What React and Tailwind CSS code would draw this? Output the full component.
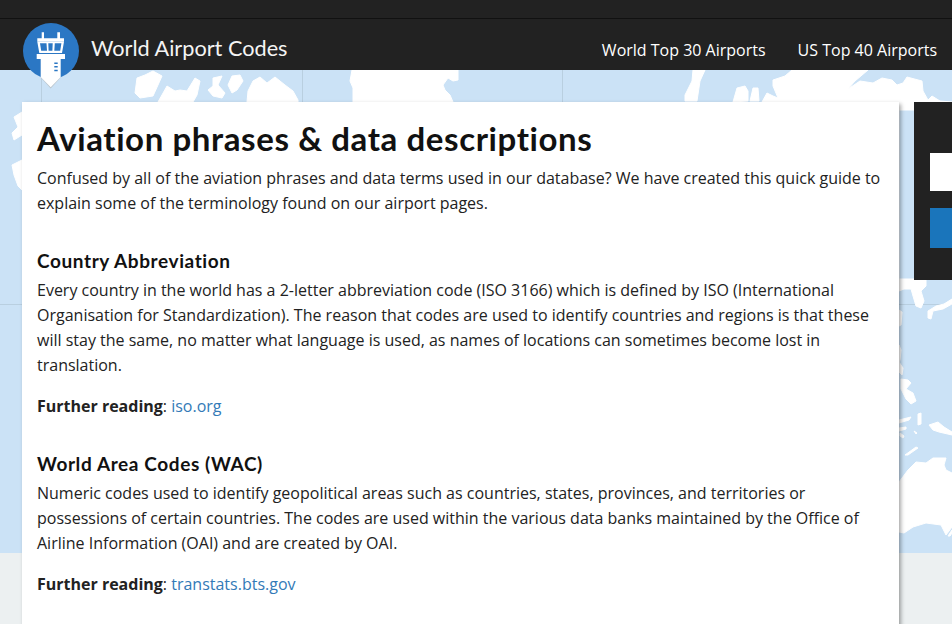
const heading = { fontFamily: '"Lato", "Liberation Sans", sans-serif' };

function Tower() {
  return (
    <svg width="56" height="68" viewBox="0 0 56 68" className="absolute left-[23px] top-[23px]">
      <circle cx="28" cy="28" r="28" fill="#2b77c4" />
      <path d="M17.700 54.500L27.700 65.500L37.700 54.500z" fill="#b9c4cc" />
      {/* antennas + roof */}
      <path d="M18.700 9.300h2.300v6h13.300v-6h2.700v6h4v3.400h-26.700v-3.400h4.400z" fill="#fff" />
      {/* cab with three windows */}
      <path d="M14.300 18.700h26.700l-2 11.300h-22.700z M17 20.300l1.200 7.400h5.800l-.5-7.400z M25.300 20.300l.3 7.400h3.800l.3-7.400z M31.800 20.300l-.5 7.400h5.900l1.200-7.400z" fill="#fff" fillRule="evenodd" />
      <path d="M13.700 31h28.300v5h-4.300v18l-10 10.300l-10-10.300v-18h-4z" fill="#fff" />
      <path d="M31.300 39.500h3.400v1.600h-3.400zM31.300 43h3.400v1.600h-3.400zM31.300 46.700h3.400v1.600h-3.400z" fill="#2b77c4" />
    </svg>
  );
}

function MapBg() {
  const land = [
    // left edge
    "M14 117L22 112V135L14 140L12 133L18 127Z",
    "M12 165L22 160V190L18 186L14 175Z",
    // top strip
    "M153 71L162 76L158 85L153 96L140 98L135 93L137 78L145 75Z",
    "M158 102L167 86L175 91L180 90L187 91L195 78L200 81L197 95L193 102Z",
    "M213 78L222 76L218 85L225 93L222 98L213 96L208 90L213 86Z",
    "M232 76L240 75L243 81L237 90L232 93L228 85Z",
    "M247 102L248 91L253 81L260 77L267 83L275 77L285 85L293 91L298 100V102Z",
    "M352 70H458V80L453 81L448 78L443 85L445 90L450 95L453 102H353V88L350 81Z",
    "M693 70H705L700 81L697 101H685V95L692 81Z",
    "M737 88L745 86L748 91L748 101L733 102Z",
    "M753 88L758 88L759 101L750 101Z",
    "M762 102L767 93L773 96L778 98L773 86L773 80L785 76L792 70H868L855 81L848 89L860 81L873 83L882 78L892 80L897 85L903 83L907 77L922 81L923 91L928 100L932 96L940 101L952 102V110H899V290H762Z",
    // right side, below the sidebar
    "M899 279H926V286L921 291L924 301L921 308L916 306L913 296L911 289L904 289L899 291Z",
    "M928 311L936 306L944 304L952 299V304L943 309L933 311L931 319L928 318Z",
    "M899 310L902 312L901 325L899 326Z",
    "M899 345L901 350L900 360L899 362Z",
    "M899 362L903 368L902 375L899 372Z",
    "M901 379L908 380L911 383L906 389L913 393L916 401L911 404L906 399L901 389Z",
    "M918 414L921 413L921 424L918 425Z",
    "M899 420L911 417L909 420L899 423Z",
    "M899 428L906 427V429L899 431Z",
    "M900 433L904 436L903 438L900 436Z",
    "M914 431L917 433L916 434Z",
    "M905 455L916 447L918 448L908 455Z",
    "M929 425L938 422L944 427L952 432V435L939 432L933 430Z",
    "M899 482L908 470L916 462L926 463L933 458L946 458L944 465L946 470L952 473V527L946 535L941 525L926 523L913 527L904 533L899 532Z",
    "M948 536L952 530V533L950 536Z",
  ];
  return (
    <svg width="952" height="483" viewBox="0 70 952 483" className="absolute left-0 top-[70px]">
      <g stroke="#b9cfe0" strokeWidth="1">
        <path d="M41.500 70v32M302.500 70v32M562.500 70v32M822.500 70v32M0 304.500h22M899 304.500h53" />
      </g>
      <g fill="#fff" stroke="#fff" strokeWidth="1" strokeLinejoin="round">
        {land.map((d, i) => <path key={i} d={d} />)}
      </g>
    </svg>
  );
}

function Further({ href }) {
  return (
    <p className="mt-4 text-[16px] leading-[25px]">
      <strong className="font-bold">Further reading</strong>: <a className="text-[#337ab7]" href="#">{href}</a>
    </p>
  );
}

export default function App() {
  return (
    <div className="relative h-[624px] w-[952px] overflow-hidden bg-[#ecf0f1] text-[#222]" style={{ fontFamily: '"Open Sans", sans-serif' }}>
      <div className="absolute inset-x-0 top-[70px] h-[483px] bg-[#cbe2f6]" />
      <MapBg />

      {/* header */}
      <div className="relative h-[70px] bg-[#222]">
        <div className="h-[19px] border-b border-[#111]" />
        <div className="flex h-[51px] items-center pl-[91px] pr-[15px] pt-2">
          <span className="text-[21.700px] font-normal text-[#f4f4f4]" style={heading}>World Airport Codes</span>
          <nav className="ml-auto flex gap-8 pt-[3px] text-[16px] font-medium text-white">
            <a href="#">World Top 30 Airports</a>
            <a href="#">US Top 40 Airports</a>
          </nav>
        </div>
      </div>
      <Tower />

      {/* content */}
      <div className="relative flex items-start pl-[22px] pt-8">
        <main className="h-[700px] w-[877px] shrink-0 bg-white px-[15px] pt-[17px] shadow-[2px_2px_4px_rgba(0,0,0,0.35)]">
          <h1 className="text-[33px] font-bold leading-[38px] tracking-[0.6px] text-[#111]" style={heading}>Aviation phrases &amp; data descriptions</h1>
          <p className="mt-[9px] text-[16px] leading-[25px]">Confused by all of the aviation phrases and data terms used in our database? We have created this quick guide to explain some of the terminology found on our airport pages.</p>

          <h3 className="mt-[33px] text-[19px] font-bold leading-[23px] tracking-[0.6px] text-[#111]" style={heading}>Country Abbreviation</h3>
          <p className="mt-[6px] text-[16px] leading-[25px]">Every country in the world has a 2-letter abbreviation code (ISO 3166) which is defined by ISO (International Organisation for Standardization). The reason that codes are used to identify countries and regions is that these will stay the same, no matter what language is used, as names of locations can sometimes become lost in translation.</p>
          <Further href="iso.org" />

          <h3 className="mt-[33px] text-[19px] font-bold leading-[23px] tracking-[0.6px] text-[#111]" style={heading}>World Area Codes (WAC)</h3>
          <p className="mt-[6px] text-[16px] leading-[25px]">Numeric codes used to identify geopolitical areas such as countries, states, provinces, and territories or possessions of certain countries. The codes are used within the various data banks maintained by the Office of Airline Information (OAI) and are created by OAI.</p>
          <Further href="transtats.bts.gov" />
        </main>

        <aside className="ml-[15px] flex h-[178px] w-[300px] shrink-0 flex-col gap-[17px] bg-[#222] pl-4 pt-[51px]">
          <div className="h-[38px] bg-white" />
          <div className="h-[40px] bg-[#1a75bb]" />
        </aside>
      </div>
    </div>
  );
}
